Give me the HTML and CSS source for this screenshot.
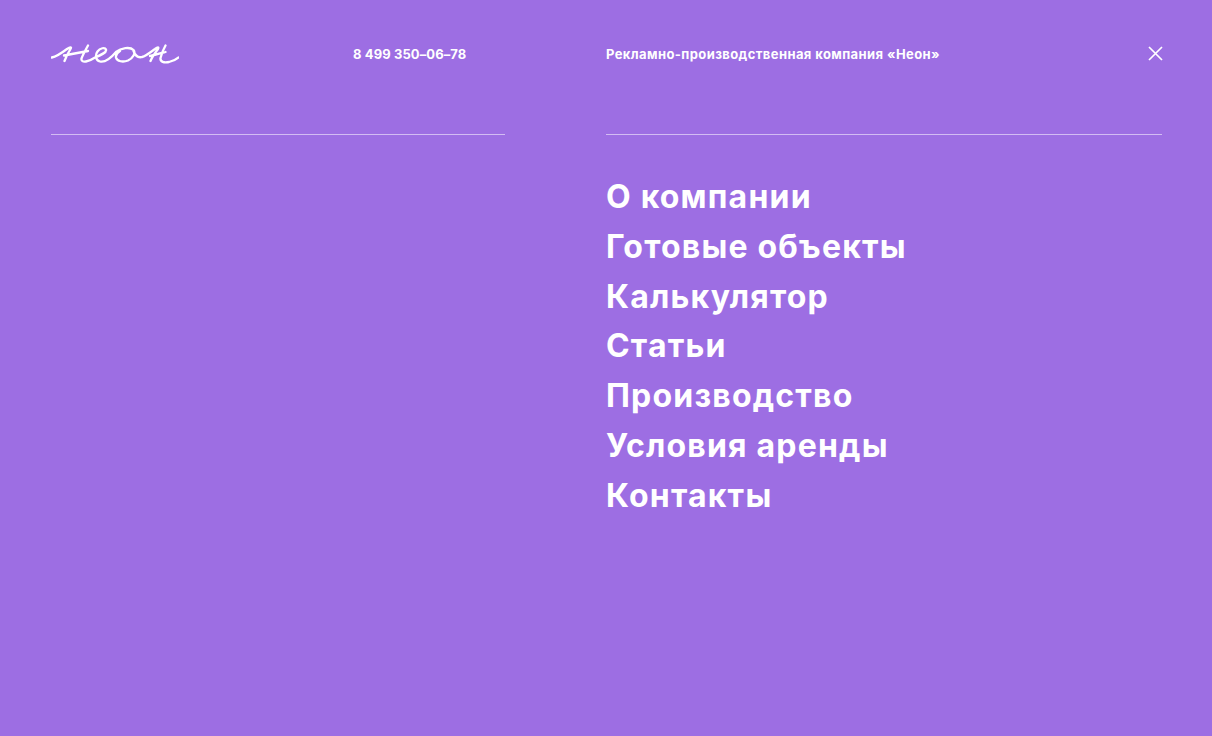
FILE: index.html
```html
<!DOCTYPE html>
<html lang="ru">
<head>
<meta charset="utf-8">
<title>Неон</title>
<link rel="stylesheet" href="styles.css">
</head>
<body>
<div class="page">
  <header class="top">
    <div class="col left">
      <div class="head">
        <svg class="logo" viewBox="0 0 128 22" aria-label="Неон"><path d="M0.800 14.500C6 13.500 12 9 16 6C19 4 21 3.500 19.500 6C17 10 15 14 13.500 18M13 12.500C21 11 29 9.500 37 8M37 2.500C34.500 7 32 11.500 30.500 15.500C30 18 32 19 35 18.500C38 18 41 16.500 44 14.500C50 12 56 9.500 55 6.500C54 4 49 5 46.500 8.500C44 12 44.500 17.500 49 18.500C54 19.500 60 15 65 9C70 5 79 3.500 82.500 7C85 10 82 15 77 17.500C72 19.500 66 18.500 65 14.500C64.500 12 66.500 9.500 69 8M82.500 8C84 12 87 15 91 14C94 13.500 100 9 104 6C107 3.500 108 4 107 6C104 10 101 14 99.500 18M99 13C104 12 109 10.500 114.500 9M114.500 2.500C112 7 110.500 11 109.500 15C109 19 113 20 118 19C122 18 125 16.500 127.300 14.500"/></svg>
        <a class="phone" href="#">8 499 350–06–78</a>
      </div>
      <div class="rule"></div>
    </div>
    <div class="col right">
      <div class="head">
        <span class="tag">Рекламно-производственная компания «Неон»</span>
        <svg class="close" viewBox="0 0 15 15" aria-label="Закрыть"><path d="M1 1L14 14M14 1L1 14"/></svg>
      </div>
      <div class="rule"></div>
      <nav class="menu">
        <a href="#">О компании</a>
        <a href="#">Готовые объекты</a>
        <a href="#">Калькулятор</a>
        <a href="#">Статьи</a>
        <a href="#">Производство</a>
        <a href="#">Условия аренды</a>
        <a href="#">Контакты</a>
      </nav>
    </div>
  </header>
</div>
</body>
</html>
```
FILE: styles.css
```css
* { box-sizing: border-box; }
html, body { margin: 0; height: 100%; }
body { background: #9d6ee3; color: #fff; font-family: Inter, "Noto Sans", sans-serif; overflow: hidden; }
a { color: inherit; text-decoration: none; }
.page { height: 736px; padding: 0 50px 0 51px; }
.top { display: grid; grid-template-columns: 454px 556px; column-gap: 101px; }
.head { height: 134px; padding-top: 43px; display: flex; align-items: flex-start; }
.logo { width: 128px; height: 22px; display: block; flex: none; }
.logo path { fill: none; stroke: #fff; stroke-width: 2.300; stroke-linecap: round; stroke-linejoin: round; }
.phone { margin-left: 174px; font-size: 13px; font-weight: 700; line-height: 22px; letter-spacing: 0.100px; }
.tag { font-size: 13px; font-weight: 700; line-height: 22px; letter-spacing: 0.400px; }
.close { width: 15px; height: 15px; margin: 3px -1px 0 auto; display: block; }
.close path { fill: none; stroke: #fff; stroke-width: 1.700; }
.rule { height: 1px; background: #d3bcf3; }
.menu { display: flex; flex-direction: column; padding-top: 37px; }
.menu a { font-size: 32px; font-weight: 700; line-height: 49.800px; letter-spacing: 1.200px; }
```
